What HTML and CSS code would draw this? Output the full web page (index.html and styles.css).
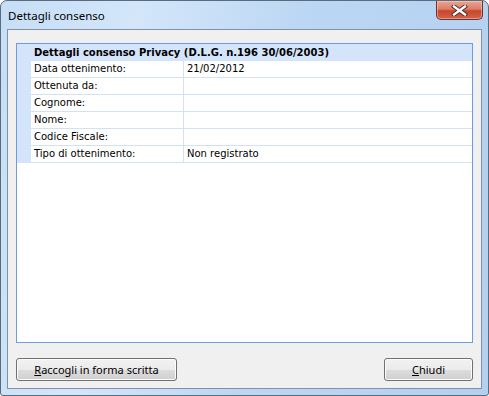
FILE: index.html
```html
<!DOCTYPE html>
<html>
<head>
<meta charset="utf-8">
<link rel="stylesheet" href="styles.css">
</head>
<body>
<div class="window">
  <div class="titlebar">
    <span class="title">Dettagli consenso</span>
    <div class="close">
      <svg width="17" height="11" viewBox="0 0 17 11">
        <path d="M3 1.5 L14 9.5 M14 1.5 L3 9.5" stroke="#4a2a28" stroke-width="4.2" stroke-linecap="square"/>
        <path d="M3 1.5 L14 9.5 M14 1.5 L3 9.5" stroke="#ffffff" stroke-width="2.4" stroke-linecap="square"/>
      </svg>
    </div>
  </div>
  <div class="client">
    <div class="panel">
      <div class="panel-head">Dettagli consenso Privacy (D.L.G. n.196 30/06/2003)</div>
      <div class="grid">
        <div class="row"><div class="gut"></div><div class="lab">Data ottenimento:</div><div class="val">21/02/2012</div></div>
        <div class="row"><div class="gut"></div><div class="lab">Ottenuta da:</div><div class="val"></div></div>
        <div class="row"><div class="gut"></div><div class="lab">Cognome:</div><div class="val"></div></div>
        <div class="row"><div class="gut"></div><div class="lab">Nome:</div><div class="val"></div></div>
        <div class="row"><div class="gut"></div><div class="lab">Codice Fiscale:</div><div class="val"></div></div>
        <div class="row"><div class="gut"></div><div class="lab">Tipo di ottenimento:</div><div class="val">Non registrato</div></div>
      </div>
    </div>
    <div class="footer">
      <button class="btn btn-wide"><u>R</u>accogli in forma scritta</button>
      <button class="btn btn-close"><u>C</u>hiudi</button>
    </div>
  </div>
</div>
</body>
</html>
```

FILE: styles.css
```css
html, body {
  margin: 0;
  padding: 0;
  background: #ffffff;
}
.window {
  width: 489px;
  height: 396px;
  box-sizing: border-box;
  border: 1px solid #5b6b7e;
  border-radius: 7px 7px 3px 3px;
  background: linear-gradient(100deg, #c6def6 0%, #d3e6fa 25%, #bcd7f3 55%, #b3d0f0 100%);
  padding: 0 6px 6px 6px;
  display: flex;
  flex-direction: column;
  position: relative;
}
.titlebar {
  height: 28px;
  display: flex;
  align-items: center;
  flex: none;
}
.title {
  font-family: "Noto Sans", "DejaVu Sans", sans-serif;
  font-size: 11.5px;
  color: #000;
  margin-left: 1px;
}
.close {
  position: absolute;
  top: 0;
  right: 5px;
  width: 47px;
  height: 19px;
  box-sizing: border-box;
  border: 1px solid #6d3229;
  border-top: none;
  border-radius: 0 0 5px 5px;
  background: linear-gradient(#e9a694 0%, #dd7d66 45%, #c8452c 55%, #d0654a 100%);
  display: flex;
  align-items: center;
  justify-content: center;
  box-shadow: inset 0 0 0 1px rgba(255,220,210,0.45);
}
.close svg { display: block; }
.client {
  flex: 1;
  border: 1px solid #8491a4;
  background: #f0f0f0;
  padding: 13px 8px 0 8px;
  display: flex;
  flex-direction: column;
}
.panel {
  height: 300px;
  box-sizing: border-box;
  border: 1px solid #6f9be0;
  background: #ffffff;
  flex: none;
}
.panel-head {
  height: 17px;
  line-height: 17px;
  background: #d4e4fa;
  padding-left: 17px;
  font-family: "DejaVu Sans", sans-serif;
  font-size: 10px;
  font-weight: bold;
  color: #000;
  white-space: nowrap;
}
.grid {
  font-family: "DejaVu Sans", sans-serif;
  font-size: 10px;
  color: #000;
}
.row {
  display: flex;
  height: 17px;
}
.gut {
  width: 14px;
  background: #d4e4fa;
  flex: none;
}
.lab {
  flex: none;
  width: 149px;
  border-right: 1px solid #d2e1f5;
  border-bottom: 1px solid #d2e1f5;
  padding-left: 3px;
  line-height: 16px;
  white-space: nowrap;
}
.val {
  flex: 1;
  border-bottom: 1px solid #d2e1f5;
  padding-left: 3px;
  line-height: 16px;
  white-space: nowrap;
}
.footer {
  margin-top: 15px;
  display: flex;
  justify-content: space-between;
}
.btn {
  height: 23px;
  box-sizing: border-box;
  border: 1px solid #707070;
  border-radius: 3px;
  background: linear-gradient(#f2f2f2 0%, #ebebeb 50%, #dddddd 51%, #cfcfcf 100%);
  box-shadow: inset 0 0 0 1px #fcfcfc;
  font-family: "Noto Sans", "DejaVu Sans", sans-serif;
  font-size: 11px;
  color: #000;
  padding: 0;
  margin: 0;
  line-height: 20px;
}
.btn-wide { width: 161px; }
.btn-close { width: 89px; }
```
